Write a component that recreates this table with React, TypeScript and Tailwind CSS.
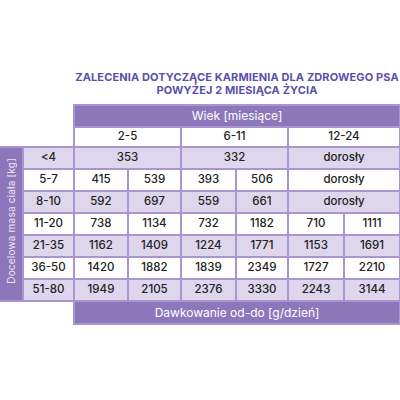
const rows = [
  { kg: "<4", cells: [["353", 2], ["332", 2], ["dorosły", 2]] },
  { kg: "5-7", cells: [["415"], ["539"], ["393"], ["506"], ["dorosły", 2]] },
  { kg: "8-10", cells: [["592"], ["697"], ["559"], ["661"], ["dorosły", 2]] },
  { kg: "11-20", cells: [["738"], ["1134"], ["732"], ["1182"], ["710"], ["1111"]] },
  { kg: "21-35", cells: [["1162"], ["1409"], ["1224"], ["1771"], ["1153"], ["1691"]] },
  { kg: "36-50", cells: [["1420"], ["1882"], ["1839"], ["2349"], ["1727"], ["2210"]] },
  { kg: "51-80", cells: [["1949"], ["2105"], ["2376"], ["3330"], ["2243"], ["3144"]] },
] as { kg: string; cells: [string, number?][] }[];

const cell = "border-2 border-[#a995d0] p-0 text-center align-middle";

export default function App() {
  return (
    <div className="h-[400px] w-[400px] bg-white pt-[71px] font-['Inter',sans-serif] text-[#222]">
      <h1 className="ml-[74px] w-[326px] text-center text-[11px] font-bold uppercase leading-[13px] tracking-[0.01em] text-[#5b50ab]">
        Zalecenia dotyczące karmienia dla zdrowego psa
        <br />
        powyżej 2 miesiąca życia
      </h1>
      <table className="mt-[7px] w-[400px] table-fixed border-collapse text-[11.5px] font-medium">
        <colgroup>
          <col className="w-[23px]" />
          <col className="w-[51px]" />
          <col className="w-[54px]" />
          <col className="w-[53px]" />
          <col className="w-[55px]" />
          <col className="w-[52px]" />
          <col className="w-[56px]" />
          <col className="w-[56px]" />
        </colgroup>
        <tbody>
          <tr className="h-[22px]">
            <td colSpan={2} />
            <td colSpan={6} className={`${cell} bg-[#8b77b9] text-[12px] font-normal text-white`}>
              Wiek [miesiące]
            </td>
          </tr>
          <tr className="h-[20px] bg-white">
            <td colSpan={2} />
            <td colSpan={2} className={cell}>2-5</td>
            <td colSpan={2} className={cell}>6-11</td>
            <td colSpan={2} className={cell}>12-24</td>
          </tr>
          {rows.map((r, i) => (
            <tr key={r.kg} className={`h-[22px] ${i % 2 === 0 ? "bg-[#ddd6ec]" : "bg-white"}`}>
              {i === 0 && (
                <td rowSpan={7} className={`${cell} border-l-0 bg-[#8b77b9]`}>
                  <span className="inline-block rotate-180 text-[10px] font-normal tracking-[0.02em] text-[#ece6f6] [writing-mode:vertical-rl]">
                    Docelowa masa ciała [kg]
                  </span>
                </td>
              )}
              <td className={cell}>{r.kg}</td>
              {r.cells.map(([v, span], j) => (
                <td key={j} colSpan={span ?? 1} className={cell}>
                  {v}
                </td>
              ))}
            </tr>
          ))}
          <tr className="h-[23px]">
            <td colSpan={2} />
            <td colSpan={6} className={`${cell} bg-[#8b77b9] text-[12px] font-normal text-white`}>
              Dawkowanie od-do [g/dzień]
            </td>
          </tr>
        </tbody>
      </table>
    </div>
  );
}
